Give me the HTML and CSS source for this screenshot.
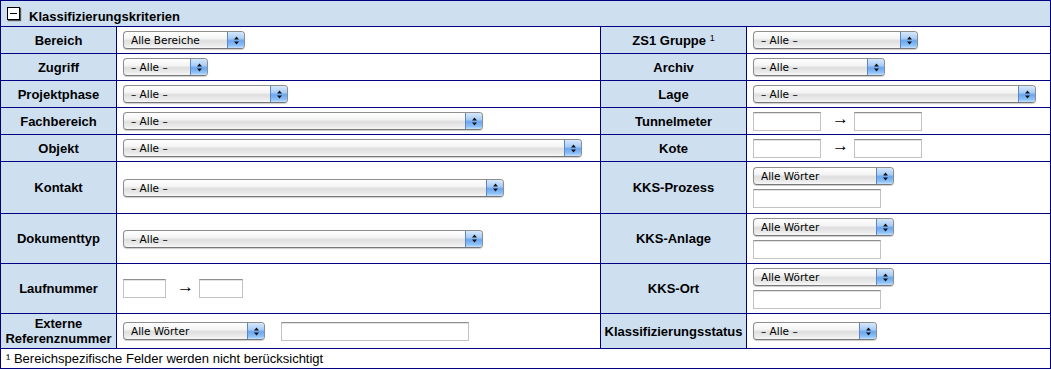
FILE: index.html
```html
<!DOCTYPE html>
<html lang="de">
<head>
    <meta charset="UTF-8">
    <title>Klassifizierungskriterien</title>
    <link rel="stylesheet" href="styles.css">
</head>
<body>
    <table class="criteria">
        <colgroup>
            <col class="col-label">
            <col class="col-value">
            <col class="col-label2">
            <col class="col-value2">
        </colgroup>
        <tr class="head">
            <td colspan="4"><span class="toggle"></span>Klassifizierungskriterien</td>
        </tr>
        <tr class="row-s">
            <th>Bereich</th>
            <td><span class="popup w-122"><select><option>Alle Bereiche</option></select><span class="cap"><svg width="7" height="11" viewBox="0 0 7 11"><path d="M3.5 1.5L6 4.5H1zM3.5 9.5L6 6.5H1z" fill="#111"/></svg></span></span></td>
            <th>ZS1 Gruppe <sup>1</sup></th>
            <td><span class="popup w-165"><select><option>– Alle –</option></select><span class="cap"><svg width="7" height="11" viewBox="0 0 7 11"><path d="M3.5 1.5L6 4.5H1zM3.5 9.5L6 6.5H1z" fill="#111"/></svg></span></span></td>
        </tr>
        <tr class="row-s">
            <th>Zugriff</th>
            <td><span class="popup w-85"><select><option>– Alle –</option></select><span class="cap"><svg width="7" height="11" viewBox="0 0 7 11"><path d="M3.5 1.5L6 4.5H1zM3.5 9.5L6 6.5H1z" fill="#111"/></svg></span></span></td>
            <th>Archiv</th>
            <td><span class="popup w-132"><select><option>– Alle –</option></select><span class="cap"><svg width="7" height="11" viewBox="0 0 7 11"><path d="M3.5 1.5L6 4.5H1zM3.5 9.5L6 6.5H1z" fill="#111"/></svg></span></span></td>
        </tr>
        <tr class="row-s">
            <th>Projektphase</th>
            <td><span class="popup w-165"><select><option>– Alle –</option></select><span class="cap"><svg width="7" height="11" viewBox="0 0 7 11"><path d="M3.5 1.5L6 4.5H1zM3.5 9.5L6 6.5H1z" fill="#111"/></svg></span></span></td>
            <th>Lage</th>
            <td><span class="popup w-283"><select><option>– Alle –</option></select><span class="cap"><svg width="7" height="11" viewBox="0 0 7 11"><path d="M3.5 1.5L6 4.5H1zM3.5 9.5L6 6.5H1z" fill="#111"/></svg></span></span></td>
        </tr>
        <tr class="row-s">
            <th>Fachbereich</th>
            <td><span class="popup w-360"><select><option>– Alle –</option></select><span class="cap"><svg width="7" height="11" viewBox="0 0 7 11"><path d="M3.5 1.5L6 4.5H1zM3.5 9.5L6 6.5H1z" fill="#111"/></svg></span></span></td>
            <th>Tunnelmeter</th>
            <td><span class="range"><input class="field w-68" type="text"><span class="arrow">→</span><input class="field w-68" type="text"></span></td>
        </tr>
        <tr class="row-s">
            <th>Objekt</th>
            <td><span class="popup w-459"><select><option>– Alle –</option></select><span class="cap"><svg width="7" height="11" viewBox="0 0 7 11"><path d="M3.5 1.5L6 4.5H1zM3.5 9.5L6 6.5H1z" fill="#111"/></svg></span></span></td>
            <th>Kote</th>
            <td><span class="range"><input class="field w-68" type="text"><span class="arrow">→</span><input class="field w-68" type="text"></span></td>
        </tr>
        <tr class="row-l">
            <th>Kontakt</th>
            <td><span class="popup w-381"><select><option>– Alle –</option></select><span class="cap"><svg width="7" height="11" viewBox="0 0 7 11"><path d="M3.5 1.5L6 4.5H1zM3.5 9.5L6 6.5H1z" fill="#111"/></svg></span></span></td>
            <th>KKS-Prozess</th>
            <td>
                <div class="stack">
                    <span class="popup w-140"><select><option>Alle Wörter</option></select><span class="cap"><svg width="7" height="11" viewBox="0 0 7 11"><path d="M3.5 1.5L6 4.5H1zM3.5 9.5L6 6.5H1z" fill="#111"/></svg></span></span>
                    <input class="field w-127" type="text">
                </div>
            </td>
        </tr>
        <tr class="row-m">
            <th>Dokumenttyp</th>
            <td><span class="popup w-360"><select><option>– Alle –</option></select><span class="cap"><svg width="7" height="11" viewBox="0 0 7 11"><path d="M3.5 1.5L6 4.5H1zM3.5 9.5L6 6.5H1z" fill="#111"/></svg></span></span></td>
            <th>KKS-Anlage</th>
            <td>
                <div class="stack">
                    <span class="popup w-140"><select><option>Alle Wörter</option></select><span class="cap"><svg width="7" height="11" viewBox="0 0 7 11"><path d="M3.5 1.5L6 4.5H1zM3.5 9.5L6 6.5H1z" fill="#111"/></svg></span></span>
                    <input class="field w-127" type="text">
                </div>
            </td>
        </tr>
        <tr class="row-m">
            <th>Laufnummer</th>
            <td><span class="range"><input class="field w-43" type="text"><span class="arrow">→</span><input class="field w-44" type="text"></span></td>
            <th>KKS-Ort</th>
            <td>
                <div class="stack">
                    <span class="popup w-140"><select><option>Alle Wörter</option></select><span class="cap"><svg width="7" height="11" viewBox="0 0 7 11"><path d="M3.5 1.5L6 4.5H1zM3.5 9.5L6 6.5H1z" fill="#111"/></svg></span></span>
                    <input class="field w-127" type="text">
                </div>
            </td>
        </tr>
        <tr class="row-x">
            <th>Externe<br>Referenznummer</th>
            <td><span class="range"><span class="popup w-142"><select><option>Alle Wörter</option></select><span class="cap"><svg width="7" height="11" viewBox="0 0 7 11"><path d="M3.5 1.5L6 4.5H1zM3.5 9.5L6 6.5H1z" fill="#111"/></svg></span></span><input class="field ref w-187" type="text"></span></td>
            <th>Klassifizierungsstatus</th>
            <td><span class="popup w-124"><select><option>– Alle –</option></select><span class="cap"><svg width="7" height="11" viewBox="0 0 7 11"><path d="M3.5 1.5L6 4.5H1zM3.5 9.5L6 6.5H1z" fill="#111"/></svg></span></span></td>
        </tr>
        <tr class="foot">
            <td colspan="4">¹ Bereichspezifische Felder werden nicht berücksichtigt</td>
        </tr>
    </table>
</body>
</html>
```

FILE: styles.css
```css
body {
    margin: 0;
    font-family: "Liberation Sans", Arial, sans-serif;
    font-size: 13px;
    background-color: #ffffff;
    color: #000000;
}
.criteria {
    border-collapse: collapse;
    table-layout: fixed;
    width: 1050px;
}
.col-label { width: 116px; }
.col-value { width: 484px; }
.col-label2 { width: 146px; }
.col-value2 { width: 304px; }
.criteria td,
.criteria th {
    border: 1px solid #000080;
    padding: 0 6px;
    vertical-align: middle;
}
.criteria th {
    background-color: #cedff0;
    font-weight: bold;
    text-align: center;
    line-height: 15px;
    padding: 0 2px;
}
.criteria sup {
    font-size: 9px;
    font-weight: normal;
    vertical-align: 4px;
    line-height: 0;
}
.head td {
    background-color: #cedff0;
    font-weight: bold;
    height: 23px;
    padding: 0 5px 2px;
    line-height: 14px;
    vertical-align: bottom;
}
.toggle {
    display: inline-block;
    width: 11px;
    height: 11px;
    border: 1px solid #000000;
    background: linear-gradient(#000, #000) center / 7px 1px no-repeat, #ffffff;
    box-shadow: 1px 1px 1px #555555;
    margin: 0 9px 0 1px;
    vertical-align: 1px;
}
.row-s td, .row-s th { height: 26px; }
.row-l td, .row-l th { height: 51px; }
.row-m td, .row-m th { height: 49px; }
.row-x td, .row-x th { height: 34px; }
.foot td {
    height: 19px;
    padding: 0 5px;
}

/* popup buttons */
.popup {
    display: inline-flex;
    box-sizing: border-box;
    height: 18px;
    border: 1px solid #8e8e8e;
    border-bottom-color: #777777;
    border-radius: 4px;
    background: linear-gradient(#ffffff, #f4f4f4 40%, #dedede 55%, #ececec 85%, #f8f8f8);
    box-shadow: 0 1px 1px rgba(0, 0, 0, 0.2);
    overflow: hidden;
    vertical-align: middle;
}
.popup select {
    -webkit-appearance: none;
    appearance: none;
    flex: 1;
    min-width: 0;
    height: 100%;
    border: none;
    background: transparent;
    padding: 0 0 0 7px;
    margin: 0;
    font: 10.5px "DejaVu Sans", sans-serif;
    color: #000000;
    outline: none;
}
.cap {
    width: 16px;
    flex: none;
    border-left: 1px solid #5f86c0;
    background: linear-gradient(#d6e8fc, #a9cdf6 40%, #6aa6ef 55%, #8ec2f8 85%, #c7e2fd);
    display: flex;
    align-items: center;
    justify-content: center;
}
.w-85 { width: 85px; }
.w-122 { width: 122px; }
.w-124 { width: 124px; }
.w-132 { width: 132px; }
.w-140 { width: 141px; }
.w-142 { width: 142px; }
.w-165 { width: 165px; }
.w-283 { width: 283px; }
.w-360 { width: 360px; }
.w-381 { width: 381px; }
.w-459 { width: 459px; }

/* text fields */
.field {
    box-sizing: border-box;
    height: 19px;
    border: 1px solid #c2c2c2;
    border-top-color: #8f8f8f;
    box-shadow: inset 0 1px 0 #e2e2e2;
    padding: 0 3px;
    margin: 0;
    font: 11px "DejaVu Sans", sans-serif;
    background-color: #ffffff;
    vertical-align: middle;
}
.w-43 { width: 43px; }
.w-44 { width: 44px; }
.w-68 { width: 68px; }
.w-127 { width: 128px; }
.w-187 { width: 188px; }
.range {
    display: flex;
    align-items: center;
}
.arrow {
    font: 17px "Liberation Sans", Arial, sans-serif;
    margin: 0 5px 0 11px;
    line-height: 16px;
    padding-bottom: 4px;
}
.ref {
    margin-left: 16px;
}
.stack {
    display: flex;
    flex-direction: column;
    align-items: flex-start;
    gap: 4px;
}
```
